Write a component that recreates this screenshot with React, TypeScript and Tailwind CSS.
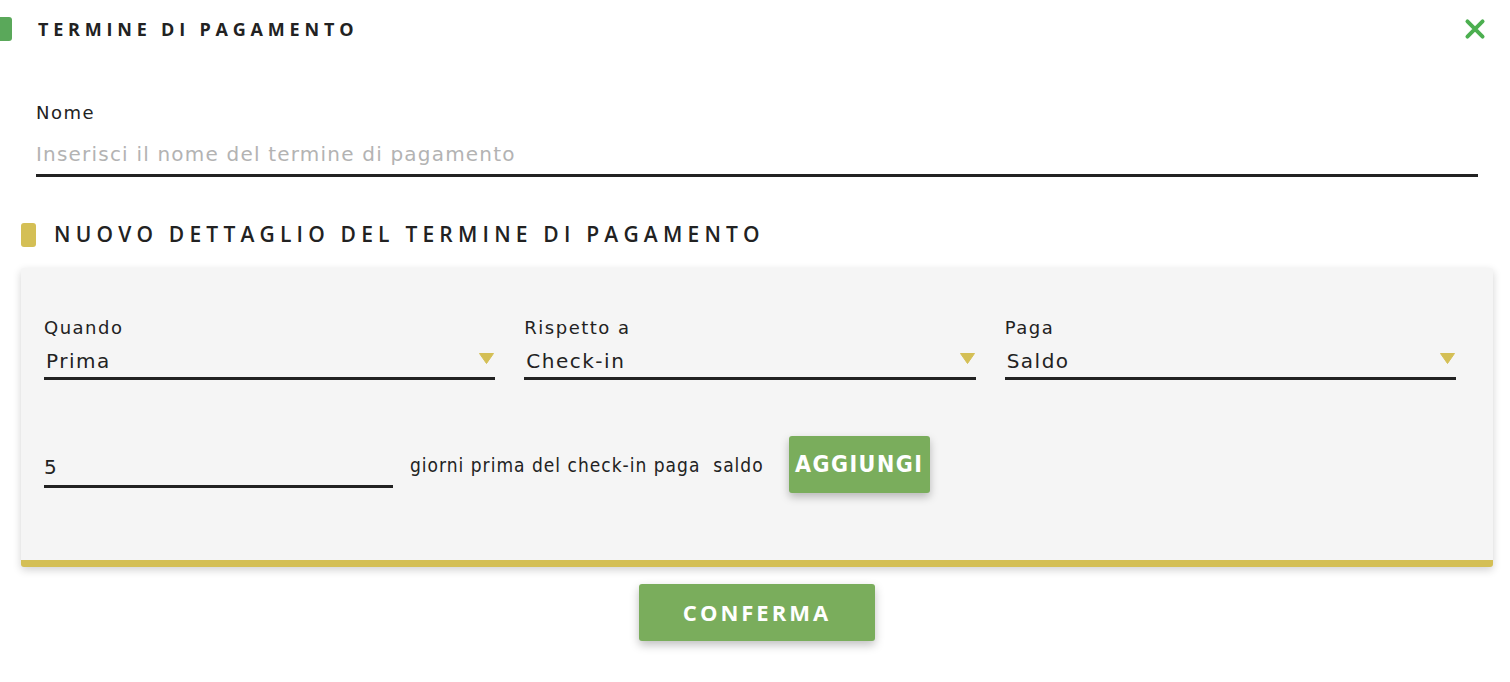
const font = { fontFamily: '"DejaVu Sans", "Open Sans", sans-serif' };
const head = { fontFamily: '"Open Sans", "DejaVu Sans", sans-serif' };
const cond = { fontFamily: '"DejaVu Sans Condensed", "Roboto", sans-serif' };

function Select({ label, value }: { label: string; value: string }) {
  return (
    <div className="flex-1 flex flex-col">
      <span className="text-[18px] leading-[22px] tracking-[1.5px] text-[#222]">{label}</span>
      <div className="flex items-center justify-between border-b-[3px] border-[#222] h-[37px] mt-[4px] pl-[2px] pt-[3px]">
        <span className="text-[20px] tracking-[1.5px] text-[#222] leading-none">{value}</span>
        <svg width="15" height="11" viewBox="0 0 15 11" className="mr-[1px] mb-[6px]">
          <path d="M0.5 0.5 L14.5 0.5 L7.5 10.5 Z" fill="#d4bf55" strokeLinejoin="round" stroke="#d4bf55" />
        </svg>
      </div>
    </div>
  );
}

export default function App() {
  return (
    <div className="w-[1510px] h-[682px] bg-white relative text-[#222]" style={font}>
      <div className="flex items-center h-[58px]">
        <div className="w-[12px] h-[24px] bg-[#5aa85a] rounded-r-[3px]" />
        <h1 className="ml-[26px] text-[18px] font-bold tracking-[4.8px]" style={head}>TERMINE DI PAGAMENTO</h1>
        <button className="ml-auto mr-[22px] text-[#4caf50]">
          <svg width="26" height="26" viewBox="0 0 24 24">
            <path d="M5 5 L19 19 M19 5 L5 19" stroke="#4caf50" strokeWidth="3.6" strokeLinecap="round" />
          </svg>
        </button>
      </div>

      <div className="pl-[36px] pr-[32px] mt-[44px]">
        <div className="text-[18px] leading-[22px] tracking-[1.5px]">Nome</div>
        <div className="border-b-[3px] border-[#222] pt-[18px] pb-[6px]">
          <span className="text-[20px] tracking-[1.2px] text-[#b3b3b3] leading-[24px]">Inserisci il nome del termine di pagamento</span>
        </div>
      </div>

      <div className="flex items-center mt-[42px] pl-[21px]">
        <div className="w-[15px] h-[24px] bg-[#d4bf55] rounded-[3px]" />
        <h2 className="ml-[18px] text-[21px] font-semibold tracking-[5.2px]" style={head}>NUOVO DETTAGLIO DEL TERMINE DI PAGAMENTO</h2>
      </div>

      <div className="ml-[21px] mr-[17px] mt-[17px] bg-[#f5f5f5] rounded-[3px] shadow-[0_3px_8px_rgba(0,0,0,0.18)] border-b-[7px] border-[#d4bf55] h-[299px] px-[23px] pt-[49px]">
        <div className="flex gap-[29px] pr-[14px]">
          <Select label="Quando" value="Prima" />
          <Select label="Rispetto a" value="Check-in" />
          <Select label="Paga" value="Saldo" />
        </div>
        <div className="flex items-center mt-[56px]">
          <div className="w-[349px] border-b-[3px] border-[#222] pt-[14px] pb-[6px] text-[20px] leading-[24px]">5</div>
          <span className="ml-[17px] mt-[2px] text-[19px] tracking-[1px]" style={cond}>
            giorni prima del check-in paga&nbsp; saldo
          </span>
          <button className="ml-[25px] w-[141px] h-[57px] bg-[#7aad5c] rounded-[3px] text-white font-bold text-[23px] tracking-[1.5px] shadow-[0_4px_8px_rgba(0,0,0,0.25)]" style={cond}>
            AGGIUNGI
          </button>
        </div>
      </div>

      <div className="flex justify-center mt-[17px]">
        <button className="w-[236px] h-[57px] bg-[#7aad5c] rounded-[3px] text-white font-bold text-[22px] tracking-[3px] shadow-[0_4px_10px_rgba(0,0,0,0.25)] ml-[4px]" style={head}>
          CONFERMA
        </button>
      </div>
    </div>
  );
}
